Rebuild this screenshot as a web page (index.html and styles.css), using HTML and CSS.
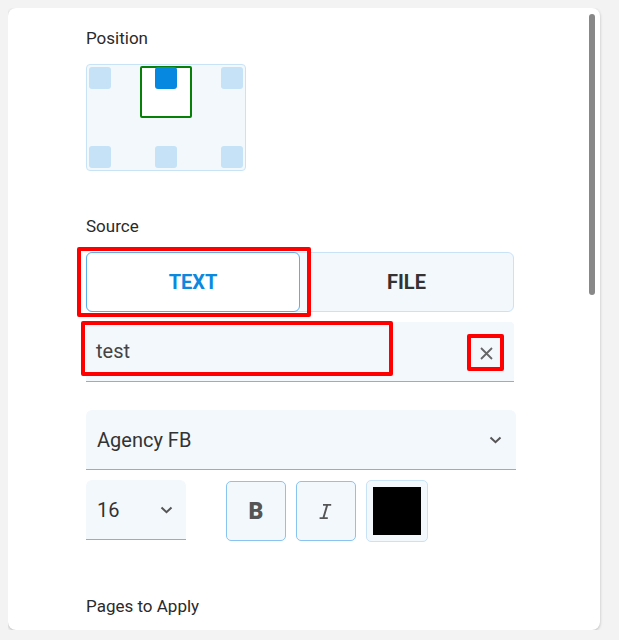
FILE: index.html
```html
<!DOCTYPE html>
<html lang="en">
<head>
    <meta charset="UTF-8">
    <title>Watermark settings</title>
    <link rel="stylesheet" href="styles.css">
</head>
<body>

<div class="panel">
    <div class="panel-scroll"></div>

    <div class="section">
        <div class="field-label">Position</div>
        <div class="position-grid">
            <span class="pos-cell"></span>
            <span class="pos-cell active"></span>
            <span class="pos-cell"></span>
            <span class="pos-cell"></span>
            <span class="pos-cell"></span>
            <span class="pos-cell"></span>
            <div class="pos-frame"></div>
        </div>
    </div>

    <div class="section section-source">
        <div class="field-label">Source</div>
        <div class="toggle">
            <button class="toggle-btn selected">TEXT</button>
            <button class="toggle-btn">FILE</button>
            <div class="mark mark-toggle"></div>
        </div>

        <div class="text-input">
            <span class="text-value">test</span>
            <button class="clear-btn">
                <svg width="15" height="15" viewBox="0 0 15 15"><path d="M2 2L13 13M13 2L2 13" stroke="#666" stroke-width="1.8" fill="none"/></svg>
            </button>
            <div class="mark mark-input"></div>
            <div class="mark mark-clear"></div>
        </div>

        <div class="select select-font">
            <span>Agency FB</span>
            <svg width="13" height="8" viewBox="0 0 13 8"><path d="M1.5 1.5L6.5 6.2L11.5 1.5" stroke="#555" stroke-width="2" fill="none"/></svg>
        </div>

        <div class="style-row">
            <div class="select select-size">
                <span>16</span>
                <svg width="13" height="8" viewBox="0 0 13 8"><path d="M1.5 1.5L6.5 6.2L11.5 1.5" stroke="#555" stroke-width="2" fill="none"/></svg>
            </div>
            <button class="style-btn bold-btn">B</button>
            <button class="style-btn">
                <svg width="16" height="16" viewBox="4 3 16 16"><path d="M9 4v1.8h3l-3.4 11.4H5.6V19h8.2v-1.8h-3.2l3.4-11.4h3.2V4z" fill="#555"/></svg>
            </button>
            <div class="color-btn"><span class="color-swatch"></span></div>
        </div>
    </div>

    <div class="section section-pages">
        <div class="field-label">Pages to Apply</div>
    </div>
</div>

</body>
</html>
```

FILE: styles.css
```css
body {
    margin: 8px;
    background: #f3f3f3;
    font-family: Roboto, "Liberation Sans", sans-serif;
    color: #333;
}

.panel {
    position: relative;
    width: 592px;
    height: 622px;
    box-sizing: border-box;
    padding: 20px 0 0 78px;
    background: white;
    border-radius: 8px;
    box-shadow: 0 1px 3px rgba(0,0,0,0.25);
    overflow: hidden;
}

.panel-scroll {
    position: absolute;
    top: 6px;
    right: 5px;
    width: 6px;
    height: 281px;
    background: #888;
    border-radius: 3px;
}

.field-label {
    font-size: 17px;
    line-height: 20px;
    height: 20px;
    margin-bottom: 16px;
    color: #2a2a2a;
}

/* position picker */
.position-grid {
    position: relative;
    width: 160px;
    height: 107px;
    box-sizing: border-box;
    padding: 2px;
    border: 1px solid #c8e3f6;
    border-radius: 4px;
    background: #f3f8fd;
    display: grid;
    grid-template-columns: 22px 22px 22px;
    grid-template-rows: 22px 22px;
    justify-content: space-between;
    align-content: space-between;
}

.pos-cell {
    position: relative;
    z-index: 1;
    background: #c5e2f6;
    border-radius: 3px;
}

.pos-cell.active {
    background: #0688e0;
}

.pos-frame {
    position: absolute;
    top: 1px;
    left: 53px;
    width: 52px;
    height: 52px;
    box-sizing: border-box;
    border: 2px solid #068006;
    border-radius: 2px;
    background: white;
}

.section-source {
    margin-top: 45px;
}

/* text / file toggle */
.toggle {
    position: relative;
    width: 428px;
    height: 60px;
    box-sizing: border-box;
    display: grid;
    grid-template-columns: 1fr 1fr;
    background: #f3f8fd;
    border: 1px solid #c8e3f6;
    border-radius: 6px;
}

.toggle-btn {
    font-family: Roboto, "Liberation Sans", sans-serif;
    font-size: 20px;
    font-weight: bold;
    color: #333;
    background: none;
    border: none;
    border-radius: 6px;
}

.toggle-btn.selected {
    color: #0b89df;
    background: white;
    border: 1px solid #5aaeea;
    margin: -1px 0 -1px -1px;
}

.mark {
    position: absolute;
    box-sizing: border-box;
    border: 4px solid #f00;
    border-radius: 2px;
    pointer-events: none;
}

.mark-toggle {
    top: -6px;
    left: -10px;
    width: 234px;
    height: 70px;
}

/* text input */
.text-input {
    position: relative;
    width: 428px;
    height: 60px;
    box-sizing: border-box;
    margin-top: 10px;
    padding: 0 10px;
    display: flex;
    align-items: center;
    justify-content: space-between;
    background: #f3f8fd;
    border-bottom: 1px solid #7db5de;
    border-radius: 4px 4px 0 0;
}

.text-value {
    font-size: 20px;
    color: #444;
    margin-top: -2px;
}

.clear-btn {
    width: 32px;
    height: 32px;
    display: flex;
    align-items: center;
    justify-content: center;
    padding: 0;
    margin-right: 2px;
    margin-top: 4px;
    background: none;
    border: none;
}

.mark-input {
    top: -1px;
    left: -5px;
    width: 312px;
    height: 55px;
}

.mark-clear {
    top: 12px;
    left: 381px;
    width: 37px;
    height: 37px;
}

/* selects */
.select {
    height: 60px;
    box-sizing: border-box;
    padding: 0 14px 0 11px;
    display: flex;
    align-items: center;
    justify-content: space-between;
    font-size: 20px;
    color: #333;
    background: #f3f8fd;
    border-bottom: 1px solid #7db5de;
    border-radius: 6px 6px 0 0;
}

.select-font {
    width: 430px;
    margin-top: 28px;
}

.style-row {
    display: flex;
    align-items: flex-start;
    margin-top: 10px;
}

.select-size {
    width: 100px;
    margin-right: 40px;
    padding-right: 13px;
}

.style-btn {
    width: 60px;
    height: 60px;
    margin-top: 1px;
    margin-right: 10px;
    display: flex;
    align-items: center;
    justify-content: center;
    background: #f3f8fd;
    border: 1px solid #88c4ef;
    border-radius: 5px;
    padding: 0;
}

.bold-btn {
    font-family: Roboto, "Liberation Sans", sans-serif;
    font-size: 23px;
    font-weight: 900;
    color: #555;
}

.color-btn {
    width: 62px;
    height: 62px;
    box-sizing: border-box;
    padding: 6px;
    background: #f3f8fd;
    border: 1px solid #c8e3f6;
    border-radius: 5px;
}

.color-swatch {
    display: block;
    width: 48px;
    height: 48px;
    background: #000;
}

.section-pages {
    margin-top: 54px;
}
```
